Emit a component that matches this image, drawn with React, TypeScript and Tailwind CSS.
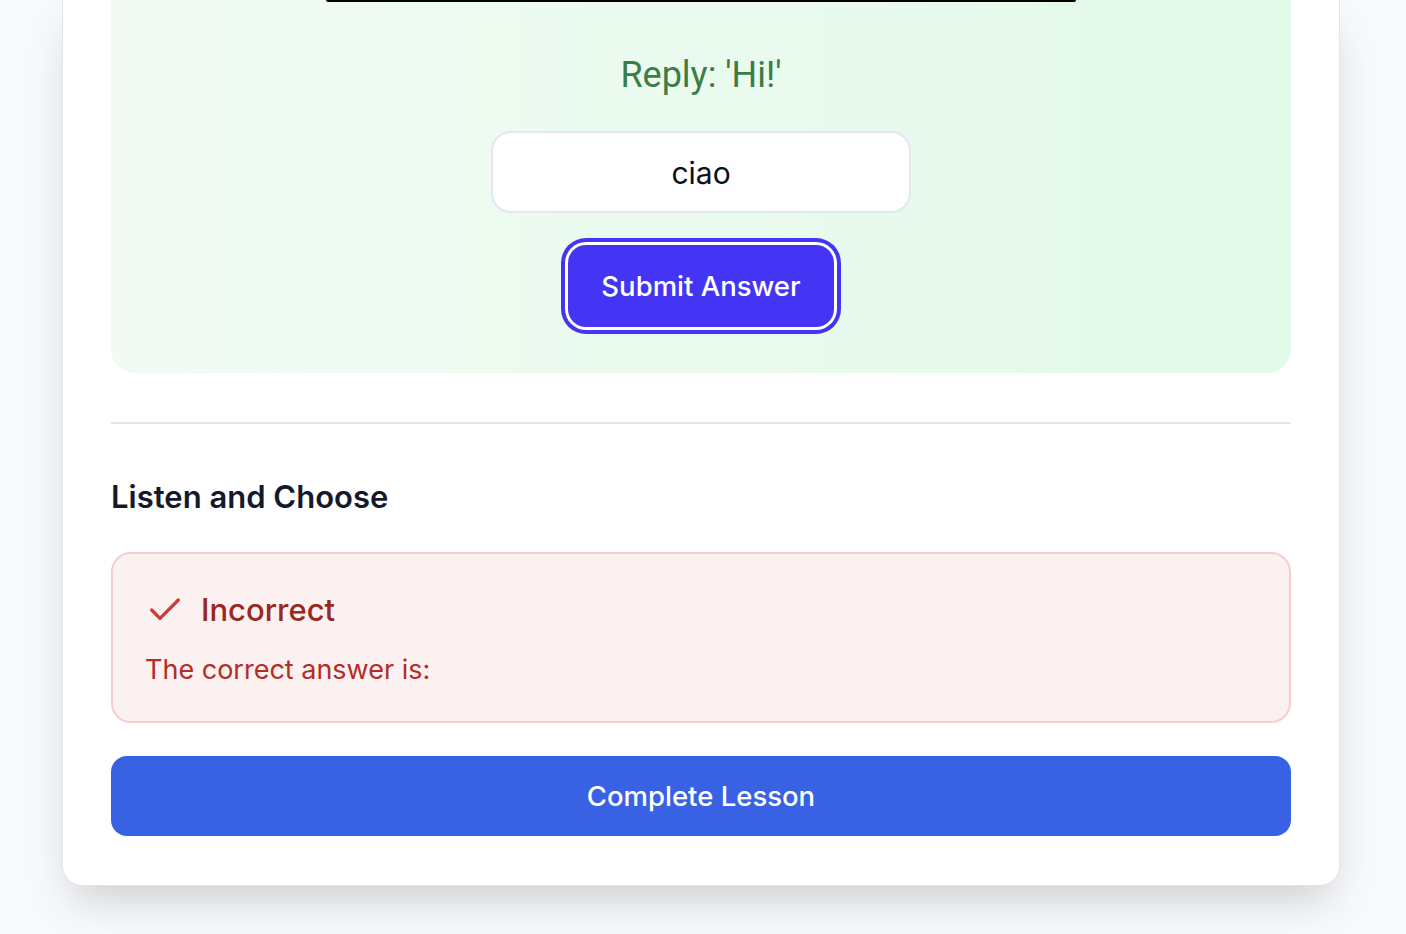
import { Check } from "lucide-react";

function ReplyPanel() {
  return (
    <section className="flex flex-col items-center rounded-b-[24px] bg-gradient-to-r from-[#f1fbf4] to-[#e3f9e9] pb-[46px]">
      <div className="h-[2px] w-[750px] rounded-b-md bg-black shadow-[0_16px_34px_-2px_rgba(0,0,0,0.32)]" />
      <p className="mt-[53px] font-['Roboto',sans-serif] text-[36px] leading-[40px] text-[#3b7d45]">
        Reply: 'Hi!'
      </p>
      <input
        readOnly
        defaultValue="ciao"
        className="mt-9 h-[82px] w-[420px] rounded-[20px] border-2 border-[#e3e7f0] bg-white pt-[2px] text-center text-[30px] text-[#0b0f1a] outline-none"
      />
      <button className="mt-[32px] h-[82px] w-[266px] rounded-[18px] bg-[#4435f5] pt-[2px] text-[27.5px] font-medium text-white ring-4 ring-[#4435f5] ring-offset-[3px] ring-offset-white">
        Submit Answer
      </button>
    </section>
  );
}

function ResultBox() {
  return (
    <div className="mt-[37px] rounded-[20px] border-2 border-[#f6cdcd] bg-[#fcf1f1] px-8 pt-[38px] pb-[35px]">
      <div className="flex h-9 items-center gap-4">
        <Check size={40} strokeWidth={2} className="text-[#d03a38]" />
        <span className="text-[31px] font-medium text-[#9a2820]">Incorrect</span>
      </div>
      <p className="mt-[26px] text-[27px] leading-8 text-[#b52b27]">The correct answer is:</p>
    </div>
  );
}

export default function App() {
  return (
    <div className="min-h-screen bg-[#f8f9fb] pr-1 font-['Inter',sans-serif]">
      <div className="mx-auto w-[1278px] rounded-b-[20px] border border-t-0 border-[#e1e4ec] bg-white px-12 pb-[49px] shadow-[0_22px_44px_-10px_rgba(0,0,0,0.18)]">
        <ReplyPanel />
        <div className="mt-[49px] h-[2px] bg-[#e3e6ef]" />
        <h2 className="mt-[55px] text-[31px] leading-9 font-semibold text-[#141a2b]">Listen and Choose</h2>
        <ResultBox />
        <button className="mt-[33px] h-[80px] w-full rounded-2xl bg-[#3862e3] pt-[2px] text-[27.5px] font-medium text-white">
          Complete Lesson
        </button>
      </div>
    </div>
  );
}
